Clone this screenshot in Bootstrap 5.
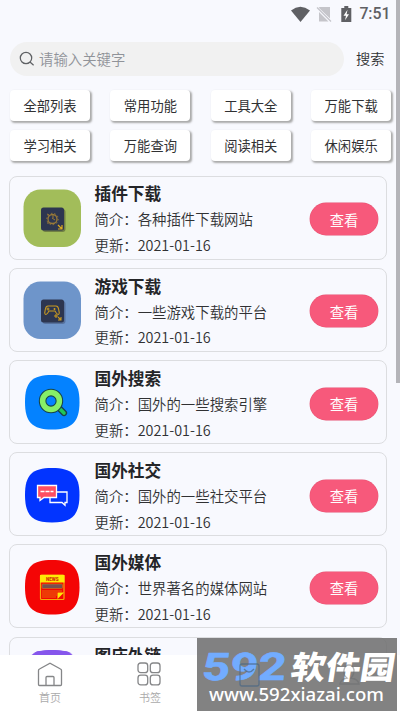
<!DOCTYPE html>
<html lang="zh-CN">
<head>
<meta charset="utf-8">
<meta name="viewport" content="width=device-width, initial-scale=1">
<title>网站列表</title>
<link href="https://cdn.jsdelivr.net/npm/bootstrap@5.3.0/dist/css/bootstrap.min.css" rel="stylesheet">
<style>
html,body{height:711px;overflow:hidden}
body{font-family:"Noto Sans CJK SC",sans-serif;font-weight:350;background:#f8f9fe;color:#303133;width:400px}
.status{height:42px;padding:0 9.5px 14.5px 0;font:500 15.8px/20px Roboto,sans-serif;color:#5f6064}
.searchrow{height:34px;padding-left:10px;margin-bottom:14px}
.searchbox{width:334px;height:34px;background:#f1f1f1;padding-left:9px;font-size:14.4px;color:#909399}
.searchlabel{font-size:14.2px;margin-left:12px}
.tags{display:grid;grid-template-columns:repeat(4,80px);column-gap:20.4px;row-gap:9px;margin-left:10px}
.tag{height:31px;background:#fff;border:0;border-radius:4px;box-shadow:1.2px 1.2px 2px #aaa;font-size:13.3px;line-height:31px;padding:0;color:#303133}
.entries{margin:14.6px 13px 0 9px;gap:8.2px}
.entry{height:84px;flex:none;border:1.3px solid #dcdde0;border-radius:8px;padding:.8px 8px 0 0}
.thumb{width:60px;height:60px;margin-left:12px;flex:none}
.info{margin-left:12.5px;padding-top:2.4px;flex:1;font-size:14.4px;line-height:25.7px;white-space:nowrap}
.info h2{font-size:16.7px;line-height:26px;font-weight:700;margin:0;color:#242528}
.view{width:68px;height:32px;border:0;background:#f7597b;color:#fff;font-size:14.3px;line-height:31px;padding:0;margin-top:2.4px;flex:none;box-shadow:0 0 0 .4px #e55372}
.tabs{height:56px;background:#fff;font-size:11px;line-height:14px;color:#aaa;padding-top:7px}
.tabs svg{margin-bottom:3px}
.scroll{position:absolute;left:396px;top:0;width:4px;height:383px;background:#b4b4b9}
.wm{position:absolute;left:197px;top:638px;width:200px;height:73px;background:rgba(110,110,110,.86)}
.wm svg{display:block}
</style>
<script src="https://cdn.jsdelivr.net/npm/bootstrap@5.3.0/dist/js/bootstrap.bundle.min.js"></script>
</head>
<body class="position-relative">
<div class="d-flex flex-column h-100 overflow-hidden">
<header class="flex-shrink-0">
<div class="status d-flex justify-content-end align-items-center">
<svg width="68" height="18" viewBox="0 0 68 18"><path d="M0 5.500Q9.300-1.800 19 5.500L9.500 17Z" fill="#5f6064"/><path d="M29 2h10v11.500L27.500 2.500zM28 7v9.500h9.500z" fill="#c5c5ca"/><path d="M26 2.500l14 14" stroke="#c5c5ca" stroke-width="1.200"/><path d="M50.300 3h3V1h4v2h3v14h-10z" fill="#5f6064"/><path d="M56.500 4.800l-4 6h2.500l-1 4.500 4-6h-2.400z" fill="#fff"/></svg><span>7:51</span>
</div>
<div class="searchrow d-flex align-items-center">
<div class="searchbox rounded-pill d-flex align-items-center"><svg width="16" height="16" viewBox="0 0 16 16" fill="none" stroke="#5f6164" stroke-width="1.25" class="me-1"><circle cx="7" cy="7" r="5.7"/><path d="M11 11l3.600 3.200"/></svg><span>请输入关键字</span></div><span class="searchlabel">搜索</span>
</div>
<div class="tags">
<button class="tag">全部列表</button><button class="tag">常用功能</button><button class="tag">工具大全</button><button class="tag">万能下载</button>
<button class="tag">学习相关</button><button class="tag">万能查询</button><button class="tag">阅读相关</button><button class="tag">休闲娱乐</button>
</div>
</header>
<main class="flex-grow-1 overflow-hidden" style="min-height:0">
<div class="entries d-flex flex-column">
<article class="entry d-flex align-items-center">
<svg class="thumb" viewBox="0 0 60 60"><rect x="1.500" y="1.500" width="57.500" height="57.500" rx="17" fill="#a2bd5a"/><rect x="20.500" y="21" width="23" height="23" rx="3" fill="#718044"/><rect x="19" y="19.500" width="23" height="23" rx="2.500" fill="#2d3650"/><g fill="none" stroke="#9a7a38"><circle cx="30.500" cy="31" r="4.500" stroke-width="1.300"/><circle cx="30.500" cy="31" r="5.700" stroke-dasharray="1.5 2"/><path d="M27 27l-2-1m0 9h2m3-5l3 2m-2-6v4"/></g><path d="M36 37l4 4m-4 0h4v-4" stroke="#dda91f" stroke-width="1.200" fill="none"/></svg>
<div class="info"><h2>插件下载</h2><div>简介：各种插件下载网站</div><div>更新：2021-01-16</div></div><button class="view rounded-pill">查看</button>
</article>
<article class="entry d-flex align-items-center">
<svg class="thumb" viewBox="0 0 60 60"><rect x="1.500" y="1.500" width="57.500" height="57.500" rx="17" fill="#6e95ca"/><rect x="20.500" y="21" width="23" height="23" rx="3" fill="#57729e"/><rect x="19" y="19.500" width="23" height="23" rx="2.500" fill="#2d3650"/><g fill="none" stroke="#c99a20" stroke-width="1.100"><path d="M26 26h8q2 0 2.600 3l.7 4q-.7 3-3 0l-1.300-2h-6l-1.300 2q-2.300 3-3 0l.7-4q.6-3 2.600-3zM26 27.500v3m-1.500-1.500h3m5-1v2m-1-1h2"/><path d="M34 34v4m-2-2h4m0 1l3 3m-3 0h3v-3"/></g></svg>
<div class="info"><h2>游戏下载</h2><div>简介：一些游戏下载的平台</div><div>更新：2021-01-16</div></div><button class="view rounded-pill">查看</button>
</article>
<article class="entry d-flex align-items-center">
<svg class="thumb" viewBox="0 0 60 60"><path d="M30 3C50 3 57.500 10 57.500 30S50 57.500 30 57.500 3 50 3 30 10 3 30 3Z" fill="#0482ff"/><path d="M38 37l4 4" stroke="#174348" stroke-width="6.200" stroke-linecap="round"/><path d="M38.500 37.500l3.500 3.500" stroke="#20c65a" stroke-width="3.600" stroke-linecap="round"/><circle cx="29" cy="29" r="8.400" fill="none" stroke="#174348" stroke-width="7.600"/><circle cx="29" cy="29" r="8.400" fill="none" stroke="#86ef68" stroke-width="5.500"/></svg>
<div class="info"><h2>国外搜索</h2><div>简介：国外的一些搜索引擎</div><div>更新：2021-01-16</div></div><button class="view rounded-pill">查看</button>
</article>
<article class="entry d-flex align-items-center">
<svg class="thumb" viewBox="0 0 60 60"><path d="M30 3C50 3 57.500 10 57.500 30S50 57.500 30 57.500 3 50 3 30 10 3 30 3Z" fill="#0234ff"/><g stroke="#fff" stroke-width="1.300"><path d="M28 27h17v10.500h-2v2.700l-3-2.700H28z" fill="#0234ff"/><path d="M15.500 20.500h19v12H22l-4 3v-3h-2.500z" fill="#ff4e62"/><path d="M18.500 26.500h13" stroke-dasharray="4 1"/></g></svg>
<div class="info"><h2>国外社交</h2><div>简介：国外的一些社交平台</div><div>更新：2021-01-16</div></div><button class="view rounded-pill">查看</button>
</article>
<article class="entry d-flex align-items-center">
<svg class="thumb" viewBox="0 0 60 60"><path d="M30 3C50 3 57.500 10 57.500 30S50 57.500 30 57.500 3 50 3 30 10 3 30 3Z" fill="#f40505"/><rect x="18.500" y="18" width="23.500" height="24.500" rx="1" fill="#f40505" stroke="#f6a80a" stroke-width="1.200"/><path d="M18 18h24.500v7.500H18z" fill="#ffea05"/><text x="30.300" y="23.600" text-anchor="middle" font-family="Roboto,sans-serif" font-weight="900" font-size="4.600" fill="#d3340a">NEWS</text><rect x="20" y="27" width="20.500" height="4.500" rx="1" fill="#765052" stroke="#e5890b" stroke-width=".5"/><path d="M20 34h20M20 36h15M20 38h15M20 40h14" stroke="#e58a08" stroke-width=".8"/><path d="M35.500 42v-6.500H42z" fill="#ffea05"/></svg>
<div class="info"><h2>国外媒体</h2><div>简介：世界著名的媒体网站</div><div>更新：2021-01-16</div></div><button class="view rounded-pill">查看</button>
</article>
<article class="entry d-flex align-items-start pt-2">
<svg class="thumb" viewBox="0 0 60 60"><path d="M30 4C50 4 57.500 10 57.500 30S50 57.500 30 57.500 3 50 3 30 10 4 30 4Z" fill="#8656ec"/><path d="M15 5.200Q30 3.200 45 5.200L50 7.500H11Z" fill="#8656ec"/></svg>
<div class="info pt-0" style="margin-top:-4px"><h2>图床外链</h2></div>
</article>
</div>
</main>
<nav class="tabs flex-shrink-0 d-flex">
<div class="w-25 d-flex flex-column align-items-center"><svg width="26" height="25" viewBox="0 0 26 25" fill="none" stroke="#858688" stroke-width="1.300"><path d="M1.500 22.500V8.500q0-1 1-1.500L13 1.200 23.500 7q1 .5 1 1.500v14q0 1-1 1h-21q-1 0-1-1zM9 23.500v-8q0-1 1-1h6q1 0 1 1v8"/></svg><span>首页</span></div>
<div class="w-25 d-flex flex-column align-items-center"><svg width="26" height="25" viewBox="0 0 26 25" fill="none" stroke="#858688" stroke-width="1.300"><rect x="1" y="1" width="9.700" height="9.700" rx="2.700"/><rect x="13.300" y="1" width="9.700" height="9.700" rx="2.700"/><rect x="1" y="13.200" width="9.700" height="9.700" rx="2.700"/><rect x="13.300" y="13.200" width="9.700" height="9.700" rx="2.700"/></svg><span>书签</span></div>
<div class="w-25"></div><div class="w-25"></div>
</nav>
</div>
<div class="scroll"></div>
<div class="wm"><svg width="200" height="73" viewBox="0 0 200 73">
<text x="4" y="42" transform="translate(4.500 0) skewX(-6)" font-family="Roboto,sans-serif" font-weight="700" font-size="38" textLength="84" lengthAdjust="spacingAndGlyphs" fill="#72acff" stroke="#72acff" stroke-width=".6">592</text>
<text x="92" y="41" transform="translate(7 0) skewX(-9)" font-family="Noto Sans CJK SC,sans-serif" font-weight="900" font-size="32" textLength="104" lengthAdjust="spacingAndGlyphs" fill="#fff">软件园</text>
<g fill="none" stroke-width="1.300"><rect x="43" y="26" width="19" height="22" rx="2" stroke="#486685" opacity=".7"/><path d="M47 31q5 6 10 0" stroke="#486685" opacity=".7"/><path d="M143 46q1-5 7-6-4-3-3-8 1-5 5-5t5 5q0 5-3 8 7 1 8 6z" stroke="#6a6b6d" opacity=".5"/></g>
<text x="12" y="63" font-family="Noto Sans,sans-serif" font-weight="500" font-size="18.500" textLength="175" lengthAdjust="spacingAndGlyphs" fill="#fff">www.592xiazai.com</text>
</svg></div>
</body>
</html>
